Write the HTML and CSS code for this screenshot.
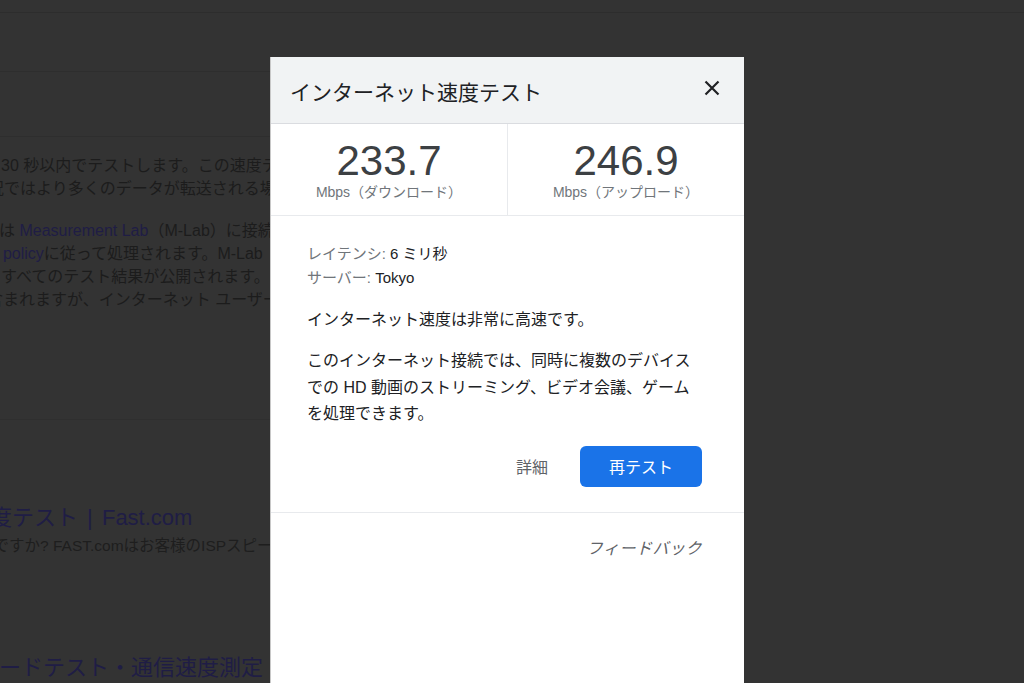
FILE: index.html
```html
<!DOCTYPE html>
<html lang="ja">
<head>
<meta charset="utf-8">
<title>インターネット速度テスト</title>
<link rel="stylesheet" href="styles.css">
</head>
<body>
<div class="page">
  <div class="topbar"></div>
  <div class="band"></div>
  <div class="band band-b"></div>
  <div class="snippet">
    <div class="bg-line l1">30 秒以内でテストします。この速度テストでは</div>
    <div class="bg-line l2">状況ではより多くのデータが転送される場合があります。</div>
    <div class="bg-para">
      <div class="bg-line l3">は <span class="bg-link">Measurement Lab</span>（M-Lab）に接続します</div>
      <div class="bg-line l4"><span class="bg-link">Privacy policy</span>に従って処理されます。M-Lab</div>
      <div class="bg-line l5">すべてのテスト結果が公開されます。</div>
      <div class="bg-line l6">含まれますが、インターネット ユーザー</div>
    </div>
  </div>
  <div class="result">
    <div class="bg-title t1">速度テスト | Fast.com</div>
    <div class="bg-desc">速いですか? FAST.comはお客様のISPスピード</div>
  </div>
  <div class="result result-2">
    <div class="bg-title t2">ードテスト・通信速度測定</div>
  </div>
</div>

<div class="dialog" role="dialog" aria-label="インターネット速度テスト">
  <div class="dlg-head">
    <div class="dlg-title">インターネット速度テスト</div>
    <div class="dlg-close" aria-label="閉じる">
      <svg width="16" height="16" viewBox="0 0 16 16"><path d="M1.5 1.5 L14.5 14.5 M14.5 1.5 L1.5 14.5" stroke="#202124" stroke-width="2.2" fill="none"/></svg>
    </div>
  </div>
  <div class="stats">
    <div class="stat">
      <div class="stat-num">233.7</div>
      <div class="stat-label">Mbps（ダウンロード）</div>
    </div>
    <div class="stat">
      <div class="stat-num">246.9</div>
      <div class="stat-label">Mbps（アップロード）</div>
    </div>
  </div>
  <div class="dlg-body">
    <div class="meta"><span class="meta-key">レイテンシ: </span>6 ミリ秒</div>
    <div class="meta"><span class="meta-key">サーバー: </span>Tokyo</div>
    <p class="summary">インターネット速度は非常に高速です。</p>
    <p class="detail">このインターネット接続では、同時に複数のデバイス<br>での HD 動画のストリーミング、ビデオ会議、ゲーム<br>を処理できます。</p>
    <div class="actions">
      <span class="btn-text">詳細</span>
      <span class="btn-primary">再テスト</span>
    </div>
  </div>
  <div class="dlg-foot">
    <span class="feedback">フィードバック</span>
  </div>
</div>
</body>
</html>
```

FILE: styles.css
```css
html, body {
  margin: 0;
  padding: 0;
}
body {
  width: 1024px;
  height: 683px;
  overflow: hidden;
  background: #333333;
  position: relative;
  font-family: "Liberation Sans", "Noto Sans CJK JP", sans-serif;
}

/* dimmed background page */
.page {
  width: 1024px;
  height: 683px;
  overflow: hidden;
}
.topbar {
  height: 12px;
  border-bottom: 1px solid #2d2d2d;
}
.band {
  height: 58px;
  border-bottom: 1px solid #2e2e2e;
  width: 280px;
}
.band-b {
  height: 64px;
}
.snippet {
  padding-top: 17px;
  height: 265px;
  border-bottom: 1px solid #2f2f2f;
  width: 280px;
}
.bg-line {
  white-space: nowrap;
  font-size: 16px;
  line-height: 23px;
  color: #1c1c1c;
}
.bg-para {
  margin-top: 19px;
}
.l1 { margin-left: 1px; }
.l2 { margin-left: -28px; }
.l3 { margin-left: -1px; }
.l4 { margin-left: -54px; }
.l5 { margin-left: 1px; }
.l6 { margin-left: -13px; }
.bg-link {
  color: #1f1d45;
}
.result {
  padding-top: 83px;
}
.bg-title {
  white-space: nowrap;
  font-size: 22px;
  line-height: 30px;
  color: #1f1d45;
}
.t1 { margin-left: -32px; word-spacing: 3px; }
.t2 { margin-left: -1px; }
.bg-desc {
  white-space: nowrap;
  font-size: 15.5px;
  line-height: 20px;
  margin-top: 3px;
  margin-left: -37px;
  color: #1e1e1e;
}
.result-2 {
  padding-top: 97px;
}

/* dialog */
.dialog {
  position: absolute;
  left: 270px;
  top: 57px;
  width: 473px;
  height: 640px;
  background: #ffffff;
  border-left: 1px solid #c8c8c8;
  color: #202124;
}
.dlg-head {
  height: 66px;
  background: #f1f3f4;
  border-bottom: 1px solid #dadce0;
  display: flex;
  align-items: center;
  justify-content: space-between;
  padding: 0 24px 0 19px;
}
.dlg-title {
  font-size: 21px;
  line-height: 28px;
  color: #202124;
  padding-top: 6px;
}
.dlg-close {
  width: 16px;
  height: 16px;
  display: flex;
  margin-top: -4px;
}
.stats {
  display: flex;
  height: 91px;
  border-bottom: 1px solid #e8eaed;
}
.stat {
  flex: 1;
  text-align: center;
  padding-top: 16px;
}
.stat + .stat {
  border-left: 1px solid #e8eaed;
}
.stat-num {
  font-size: 42px;
  line-height: 42px;
  color: #3c4043;
}
.stat-label {
  font-size: 14px;
  line-height: 16px;
  color: #70757a;
  margin-top: 2px;
}
.dlg-body {
  padding: 26px 42px 25px 36px;
  border-bottom: 1px solid #e8eaed;
}
.meta {
  font-size: 15px;
  line-height: 24px;
  color: #202124;
}
.meta-key {
  color: #70757a;
}
.summary {
  margin: 17px 0 0;
  font-size: 16px;
  line-height: 26px;
}
.detail {
  margin: 15px 0 0;
  font-size: 16px;
  line-height: 26.5px;
}
.actions {
  margin-top: 18px;
  display: flex;
  justify-content: flex-end;
  align-items: center;
  gap: 32px;
}
.btn-text {
  font-size: 16px;
  color: #5f6368;
}
.btn-primary {
  width: 122px;
  height: 41px;
  border-radius: 6px;
  background: #1a73e8;
  color: #ffffff;
  font-size: 16px;
  display: flex;
  align-items: center;
  justify-content: center;
}
.dlg-foot {
  display: flex;
  justify-content: flex-end;
  padding: 24px 42px 0 0;
}
.feedback {
  font-size: 16px;
  line-height: 24px;
  color: #5f6368;
  font-style: italic;
  letter-spacing: 0.5px;
}
```
